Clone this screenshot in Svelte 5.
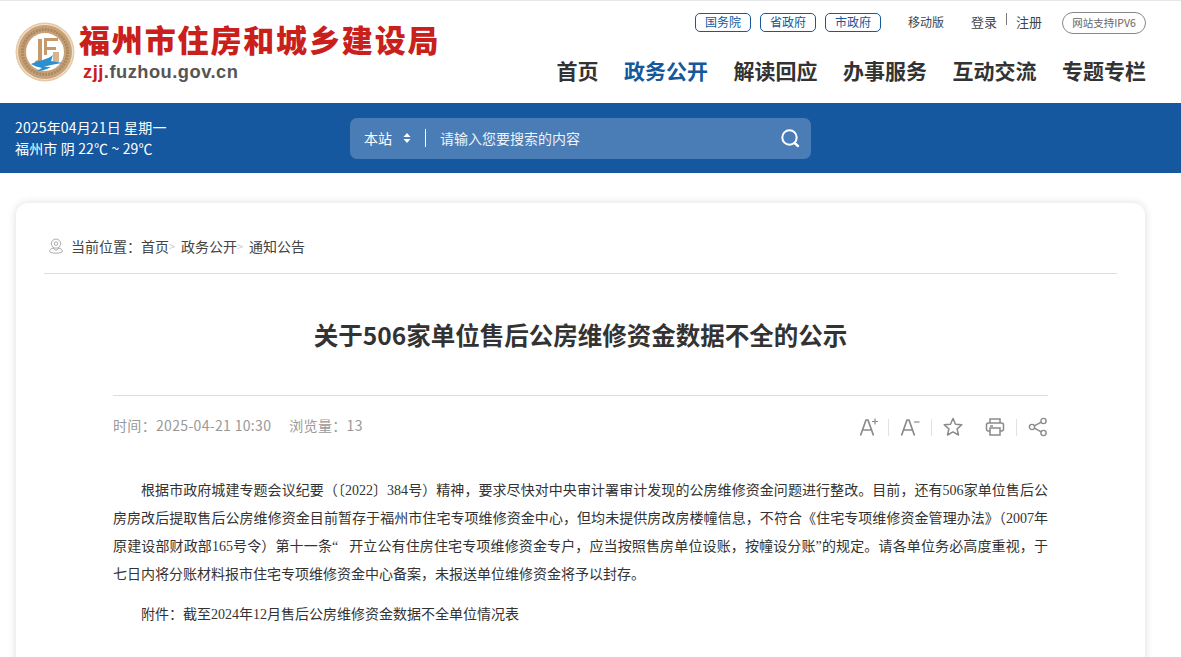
<script>
  const govLinks = ['国务院', '省政府', '市政府'];
  const navItems = ['首页', '政务公开', '解读回应', '办事服务', '互动交流', '专题专栏'];
  const crumbs = ['首页', '政务公开', '通知公告'];
</script>

<div class="page">
  <header class="header">
    <div class="brand">
      <svg class="logo" viewBox="0 0 60 60" width="60" height="60" aria-hidden="true">
        <circle cx="30" cy="30" r="29.5" fill="#e4c9a4" />
        <circle cx="30" cy="30" r="28" fill="#fff" opacity="0.5" />
        <circle cx="30" cy="30" r="27" fill="#c9a077" />
        <circle cx="30" cy="30" r="22.5" fill="none" stroke="#a88a62" stroke-width="3" stroke-dasharray="2 1" />
        <circle cx="30" cy="30" r="19" fill="#fff" />
        <path d="M20 39 L23 38 L23 17 L27 17 L27 38 L22 44 Z" fill="#c49a6c" />
        <path d="M29 16 H43 V19 H32 V25 H41 V28 H32 V33 H29 Z" fill="#c49a6c" />
        <path d="M38 30 H44 V40 H38 Z" fill="#d6b48e" />
        <path d="M16 42 C24 38 32 38 38 33 L36 39 L48 41 C40 42 34 43 29 45 L36 45 C30 48 26 49 22 49 L27 46 C23 45 19 44 16 42 Z" fill="#2b8fd0" />
      </svg>
      <div class="brand-text">
        <div class="site-name">福州市住房和城乡建设局</div>
        <div class="domain"><span class="red">zjj</span>.fuzhou.gov.cn</div>
      </div>
    </div>

    <div class="header-right">
      <div class="toplinks">
        <div class="gov-links">
          {#each govLinks as g}
            <a class="pill" href="#top">{g}</a>
          {/each}
        </div>
        <a class="mobile" href="#top">移动版</a>
        <a class="login" href="#top">登录</a>
        <span class="sep"></span>
        <a class="register" href="#top">注册</a>
        <span class="ipv6">网站支持IPV6</span>
      </div>
      <nav class="nav">
        {#each navItems as item, i}
          <a class="nav-item" class:active={i === 1} href="#top">{item}</a>
        {/each}
      </nav>
    </div>
  </header>

  <div class="band">
    <div class="weather">
      <div>2025年04月21日 星期一</div>
      <div>福州市 阴 22℃ ~ 29℃</div>
    </div>
    <div class="search">
      <span class="scope">本站</span>
      <svg class="updown" viewBox="0 0 8 12" width="8" height="12" aria-hidden="true">
        <path d="M4 1 L7.5 5 H0.5 Z M4 11 L0.5 7 H7.5 Z" fill="#fff" />
      </svg>
      <span class="divider"></span>
      <span class="placeholder">请输入您要搜索的内容</span>
      <svg class="magnifier" viewBox="0 0 20 20" width="20" height="20" aria-hidden="true">
        <circle cx="9.5" cy="9.5" r="7.2" fill="none" stroke="#fff" stroke-width="2" />
        <path d="M14.5 15 L18 18" stroke="#fff" stroke-width="2.4" stroke-linecap="round" />
      </svg>
    </div>
  </div>

  <main class="card">
    <div class="breadcrumb">
      <svg class="pin" viewBox="0 0 16 16" width="16" height="16" aria-hidden="true">
        <circle cx="8" cy="5.6" r="4.6" fill="none" stroke="#aaa" stroke-width="1" />
        <circle cx="8" cy="5.6" r="1.8" fill="none" stroke="#aaa" stroke-width="1" />
        <path d="M5 10 C2 11 1 12.5 2 14 C3.5 15.5 12.5 15.5 14 14 C15 12.5 14 11 11 10 L8 12.5 Z" fill="none" stroke="#aaa" stroke-width="1" />
      </svg>
      <span class="crumb-label">当前位置：</span>
      {#each crumbs as c, i}
        <span>{c}</span>
        {#if i < crumbs.length - 1}<span class="crumb-sep">&gt;</span>{/if}
      {/each}
    </div>

    <article class="article">
      <h1>关于506家单位售后公房维修资金数据不全的公示</h1>

      <div class="meta">
        <div class="meta-text">
          <span>时间：2025-04-21 10:30</span>
          <span>浏览量：13</span>
        </div>
        <div class="tools">
          <svg viewBox="0 0 20 20" width="20" height="20" aria-hidden="true">
            <path d="M1.5 18.5 L7 3 H9 L14.5 18.5 M3.4 13 H12.6" fill="none" stroke="#8a8a8a" stroke-width="1.7" />
            <path d="M13 4.5 H19 M16 1.5 V7.5" fill="none" stroke="#8a8a8a" stroke-width="1.2" />
          </svg>
          <span class="tool-sep first"></span>
          <svg viewBox="0 0 20 20" width="20" height="20" aria-hidden="true">
            <path d="M1.5 18.5 L7 3 H9 L14.5 18.5 M3.4 13 H12.6" fill="none" stroke="#8a8a8a" stroke-width="1.7" />
            <path d="M14 5 H19.5" fill="none" stroke="#8a8a8a" stroke-width="1.2" />
          </svg>
          <span class="tool-sep"></span>
          <svg viewBox="0 0 20 20" width="20" height="20" aria-hidden="true">
            <path d="M10 1.5 L12.5 7.2 L18.8 7.8 L14.1 11.9 L15.5 18 L10 14.9 L4.5 18 L5.9 11.9 L1.2 7.8 L7.5 7.2 Z" fill="none" stroke="#8a8a8a" stroke-width="1.5" stroke-linejoin="round" />
          </svg>
          <span class="tool-gap"></span>
          <svg viewBox="0 0 20 20" width="20" height="20" aria-hidden="true">
            <path d="M5 6 V2 H15 V6 M5 14 H3.5 Q1.5 14 1.5 12 V8 Q1.5 6 3.5 6 H16.5 Q18.5 6 18.5 8 V12 Q18.5 14 16.5 14 H15 M5 11 H15 V18 H5 Z M5 9 H8" fill="none" stroke="#8a8a8a" stroke-width="1.5" />
          </svg>
          <span class="tool-sep"></span>
          <svg viewBox="0 0 20 20" width="20" height="20" aria-hidden="true">
            <circle cx="4" cy="10" r="2.6" fill="none" stroke="#8a8a8a" stroke-width="1.4" />
            <circle cx="15.5" cy="4" r="2.6" fill="none" stroke="#8a8a8a" stroke-width="1.4" />
            <circle cx="15.5" cy="16" r="2.6" fill="none" stroke="#8a8a8a" stroke-width="1.4" />
            <path d="M6.4 8.8 L13.2 5.2 M6.4 11.2 L13.2 14.8" stroke="#8a8a8a" stroke-width="1.4" />
          </svg>
        </div>
      </div>

      <div class="content">
        <p>根据市政府城建专题会议纪要（〔2022〕384号）精神，要求尽快对中央审计署审计发现的公房维修资金问题进行整改。目前，还有506家单位售后公房房改后提取售后公房维修资金目前暂存于福州市住宅专项维修资金中心，但均未提供房改房楼幢信息，不符合《住宅专项维修资金管理办法》（2007年原建设部财政部165号令）第十一条“&nbsp;&nbsp;&nbsp;开立公有住房住宅专项维修资金专户，应当按照售房单位设账，按幢设分账”的规定。请各单位务必高度重视，于七日内将分账材料报市住宅专项维修资金中心备案，未报送单位维修资金将予以封存。</p>
        <p>附件：截至2024年12月售后公房维修资金数据不全单位情况表</p>
      </div>
    </article>
  </main>
</div>

<style>
  :global(body) {
    margin: 0;
    background: #fff;
  }

  .page {
    height: 657px;
    overflow: hidden;
    font-family: "Noto Sans CJK SC", "Liberation Sans", sans-serif;
    color: #333;
  }

  a {
    color: inherit;
    text-decoration: none;
  }

  .header {
    height: 102px;
    border-top: 1px solid #e6e6e6;
    display: flex;
    justify-content: space-between;
    padding: 0 35px 0 15px;
  }

  .brand {
    display: flex;
    align-items: flex-start;
    padding-top: 21px;
  }

  .logo {
    flex: none;
  }

  .brand-text {
    margin-left: 4px;
    margin-top: -3px;
  }

  .site-name {
    font-size: 31px;
    line-height: 40px;
    font-weight: 900;
    color: #c9201c;
    letter-spacing: 1.85px;
    white-space: nowrap;
  }

  .domain {
    margin: 2px 0 0 4px;
    font-family: "Liberation Sans", sans-serif;
    font-size: 18.3px;
    line-height: 22px;
    font-weight: 700;
    letter-spacing: 0.5px;
    color: #555;
  }

  .red {
    color: #c9201c;
  }

  .header-right {
    display: flex;
    flex-direction: column;
    align-items: flex-end;
  }

  .toplinks {
    display: flex;
    align-items: center;
    height: 21px;
    margin-top: 11px;
    font-size: 12px;
    color: #444;
  }

  .gov-links {
    display: flex;
    gap: 9px;
    margin-right: 27px;
  }

  .pill {
    width: 54px;
    height: 17px;
    line-height: 16px;
    text-align: center;
    border: 1px solid #15589b;
    border-radius: 5px;
    color: #15589b;
  }

  .mobile {
    margin-right: 27px;
    margin-top: -3px;
  }

  .login,
  .register {
    font-size: 13px;
    margin-top: -3px;
  }

  .sep {
    width: 1px;
    height: 12px;
    margin: -8px 9px 0 9px;
    background: #777;
  }

  .ipv6 {
    margin-left: 20px;
    width: 82px;
    height: 20px;
    line-height: 19px;
    font-size: 10.5px;
    text-align: center;
    color: #666;
    border: 1px solid #888;
    border-radius: 11px;
  }

  .nav {
    display: flex;
    gap: 25.5px;
    margin-top: 20px;
  }

  .nav-item {
    font-size: 21px;
    line-height: 34px;
    font-weight: 700;
    color: #333;
  }

  .nav-item.active {
    color: #15589b;
  }

  .band {
    height: 70px;
    background: #15589f;
    display: flex;
    align-items: center;
    padding-left: 15px;
    color: #fff;
  }

  .weather {
    width: 335px;
    font-size: 14px;
    line-height: 21px;
    margin-top: -1px;
    letter-spacing: 0.15px;
    white-space: nowrap;
  }

  .search {
    width: 461px;
    height: 41px;
    margin-top: 1px;
    background: #4a7cb5;
    border-radius: 7px;
    display: flex;
    align-items: center;
    padding: 0 11px 2px 14px;
    box-sizing: border-box;
    font-size: 14px;
  }

  .updown {
    margin-left: 11px;
  }

  .divider {
    width: 1px;
    height: 18px;
    background: #fff;
    margin: 0 14px 0 14px;
  }

  .placeholder {
    flex: 1;
    color: #eef3f9;
  }

  .card {
    width: 1129px;
    margin: 30px 0 0 16px;
    box-sizing: border-box;
    padding: 0 28px;
    height: 600px;
    background: #fff;
    border-radius: 12px;
    box-shadow: 0 0 8px rgba(0, 0, 0, 0.14);
  }

  .breadcrumb {
    height: 71px;
    border-bottom: 1px solid #ddd;
    display: flex;
    align-items: center;
    padding: 16px 0 0 4px;
    box-sizing: border-box;
    font-size: 14px;
    color: #444;
  }

  .pin {
    margin-right: 7px;
  }

  .crumb-sep {
    color: #ccc;
    font-size: 11px;
    width: 12px;
  }

  .article {
    padding: 0 69px;
  }

  h1 {
    margin: 0;
    height: 122px;
    padding-top: 43px;
    box-sizing: border-box;
    border-bottom: 1px solid #ddd;
    font-size: 24.5px;
    line-height: 36px;
    font-weight: 700;
    text-align: center;
    color: #333;
  }

  .meta {
    height: 60px;
    display: flex;
    justify-content: space-between;
    align-items: center;
  }

  .meta-text {
    display: flex;
    gap: 18px;
    margin-top: -2px;
    font-size: 14px;
    letter-spacing: 0.33px;
    color: #999;
  }

  .tools {
    display: flex;
    align-items: center;
    margin-top: 2px;
  }

  .tool-sep {
    width: 1px;
    height: 17px;
    background: #e2e2e2;
    margin: 0 11px;
  }

  .tool-sep.first {
    margin-left: 9px;
  }

  .tool-gap {
    width: 22px;
  }

  .content {
    margin-top: 21px;
    font-family: "Liberation Serif", "Noto Sans CJK SC", serif;
    font-size: 14px;
    line-height: 28px;
    color: #333;
  }

  .content p {
    margin: 0 0 12px;
    text-indent: 28px;
    text-align: justify;
  }
</style>
